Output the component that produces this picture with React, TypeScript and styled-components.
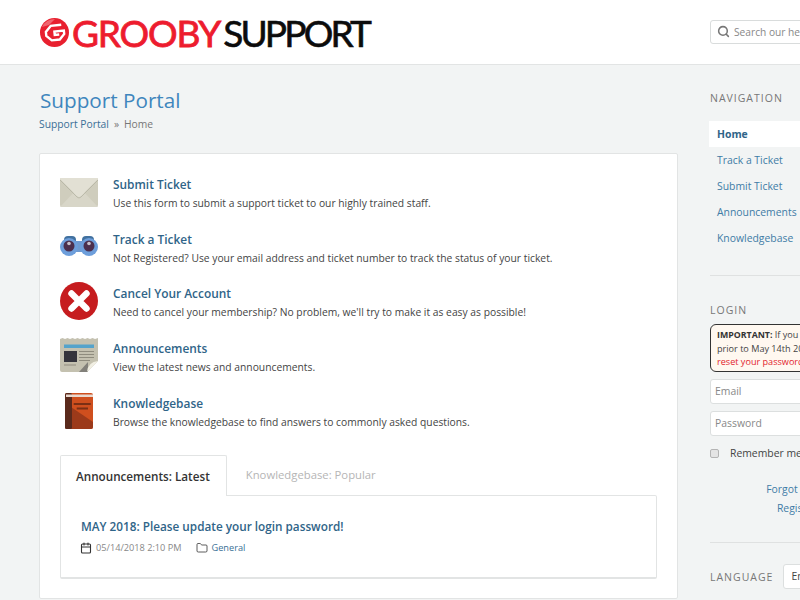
import React from "react";
import styled, { createGlobalStyle } from "styled-components";
import { Search, Calendar, Folder } from "lucide-react";

const Global = createGlobalStyle`
  html, body {
    margin: 0;
    padding: 0;
    overflow: hidden;
    background: #f2f4f4;
  }
  body {
    font-family: "Open Sans", sans-serif;
    font-size: 11px;
    color: #444;
  }
  * { box-sizing: border-box; }
`;

const Page = styled.div`
  width: 952px;
`;

const Header = styled.header`
  height: 65px;
  background: #fff;
  border-bottom: 1px solid #e2e4e4;
  display: flex;
  align-items: center;
  justify-content: space-between;
  padding: 0 40px;
  width: 100vw;
  min-width: 952px;
`;

const Logo = styled.div`
  display: flex;
  align-items: center;
  font-family: Lato, sans-serif;
  font-size: 37px;
  line-height: 1;
  height: 34px;
`;

const LogoRed = styled.span`
  color: #ed1c2e;
  margin-left: 3px;
  letter-spacing: -1.2px;
  -webkit-text-stroke: 0.8px #ed1c2e;
`;

const LogoBlack = styled.span`
  color: #0c0c0c;
  margin-left: 3px;
  letter-spacing: -2.8px;
  -webkit-text-stroke: 0.6px #0c0c0c;
`;

const SearchBox = styled.div`
  width: 202px;
  height: 24px;
  margin-top: -1px;
  background: #fff;
  border: 1px solid #d9dcdc;
  border-radius: 3px;
  display: flex;
  align-items: center;
  gap: 4px;
  padding-left: 6px;
  color: #888;
  font-size: 10.2px;
  white-space: nowrap;
  svg { color: #777; }
`;

const Main = styled.div`
  display: flex;
  gap: 32px;
  padding: 0 40px 0 39px;
`;

const Column = styled.main`
  width: 639px;
  flex: none;
`;

const Title = styled.h1`
  margin: 20px 0 0 1px;
  font-size: 20.7px;
  font-weight: 400;
  line-height: 30px;
  color: #3f86bd;
`;

const Crumbs = styled.div`
  margin-top: 1px;
  line-height: 16px;
  font-size: 10.3px;
  color: #777;
  display: flex;
  gap: 5px;
  a { color: #3a6f96; }
`;

const Card = styled.section`
  margin-top: 21px;
  height: 446px;
  background: #fff;
  border: 1px solid #e2e4e4;
  border-radius: 2px;
  padding: 20px 20px 0;
`;

const Rows = styled.div`
  display: flex;
  flex-direction: column;
  gap: 18.7px;
`;

const Row = styled.div`
  display: flex;
  height: 36px;
`;

const IconBox = styled.div`
  width: 38px;
  height: 36px;
  margin-right: 15px;
  flex: none;
  svg { display: block; }
`;

const RowTitle = styled.a`
  display: block;
  margin-top: 2px;
  font-size: 11.9px;
  font-weight: 600;
  line-height: 17px;
  color: #2f6488;
`;

const RowText = styled.div`
  margin-top: 3px;
  font-size: 10.3px;
  line-height: 15px;
  color: #444;
`;

const Tabs = styled.div`
  display: flex;
  margin-top: 26px;
  height: 41px;
`;

const Tab = styled.div<{ $active?: boolean }>`
  height: 41px;
  padding: ${(p) => (p.$active ? "0 16px 0 15px" : "0 16px 2px 18px")};
  display: flex;
  align-items: center;
  font-size: ${(p) => (p.$active ? 11.7 : 11.3)}px;
  font-weight: ${(p) => (p.$active ? 600 : 400)};
  color: ${(p) => (p.$active ? "#333" : "#b5b5b5")};
  background: ${(p) => (p.$active ? "#fff" : "transparent")};
  border: 1px solid ${(p) => (p.$active ? "#e2e4e4" : "transparent")};
  border-bottom: none;
  border-radius: 2px 2px 0 0;
  position: relative;
  z-index: 1;
`;

const Panel = styled.div`
  height: 84px;
  margin-top: -1px;
  border: 1px solid #e2e4e4;
  border-bottom-width: 2px;
  border-radius: 0 2px 2px 2px;
  padding: 21px 20px 0 19px;
`;

const PanelTitle = styled.a`
  display: block;
  margin-left: 1px;
  font-size: 11.75px;
  font-weight: 600;
  line-height: 18px;
  color: #2f6488;
`;

const Meta = styled.div`
  display: flex;
  align-items: center;
  margin-top: 6px;
  font-size: 9.2px;
  line-height: 14px;
  color: #888;
  svg { color: #333; flex: none; }
`;

const MetaItem = styled.span`
  display: flex;
  align-items: center;
  gap: 4px;
  margin-right: 14px;
  a { color: #3a6f96; }
`;

const Sidebar = styled.aside`
  width: 202px;
  flex: none;
`;

const SideHeading = styled.h3`
  margin: 0;
  font-size: 10.5px;
  font-weight: 400;
  letter-spacing: 1px;
  line-height: 16px;
  color: #777;
  text-transform: uppercase;
`;

const Nav = styled.nav`
  margin: 15px 0 0 -1px;
  display: flex;
  flex-direction: column;
`;

const NavItem = styled.a<{ $active?: boolean }>`
  height: 26.1px;
  padding-left: 8px;
  line-height: 26px;
  font-size: 10.4px;
  font-weight: ${(p) => (p.$active ? 700 : 400)};
  color: ${(p) => (p.$active ? "#2f6488" : "#3f7ca6")};
  background: ${(p) => (p.$active ? "#fff" : "transparent")};
`;

const Rule = styled.hr<{ $top?: number }>`
  border: none;
  border-top: 1px solid #dfe1e1;
  margin: ${(p) => p.$top ?? 0}px 0 0;
`;

const LoginHeading = styled(SideHeading)`
  margin-top: 26px;
`;

const NavHeading = styled(SideHeading)`
  margin-top: 25px;
`;

const Notice = styled.div`
  margin-top: 6px;
  height: 48px;
  padding: 3px 6px;
  background: #fff8f0;
  border: 1px solid #333;
  border-radius: 6px;
  font-size: 9.1px;
  line-height: 13px;
  white-space: nowrap;
  color: #444;
  b { color: #333; font-size: 8.8px; }
  a { color: #e2242c; }
`;

const Field = styled.div`
  height: 25px;
  margin-top: 7px;
  background: #fff;
  border: 1px solid #dcdfdf;
  border-radius: 3px;
  padding-left: 4px;
  line-height: 23px;
  font-size: 10.4px;
  color: #888;
`;

const Remember = styled.label`
  display: flex;
  align-items: center;
  margin-top: 11px;
  height: 12px;
  font-size: 10.4px;
  color: #444;
`;

const Check = styled.span`
  width: 9px;
  height: 9px;
  margin-right: 11px;
  background: #e4e4e4;
  border: 1px solid #b4b4b4;
  border-radius: 2px;
`;

const Links = styled.div`
  display: flex;
  flex-direction: column;
  align-items: center;
  margin: 23px 0 26px;
  padding-right: 4px;
  gap: 4px;
  font-size: 10.4px;
  line-height: 15px;
  white-space: nowrap;
  color: #3f7ca6;
`;

const Lang = styled.div`
  display: flex;
  align-items: center;
  margin-top: 21px;
  gap: 10px;
`;

const Select = styled.div`
  width: 119px;
  height: 25px;
  background: #fff;
  border: 1px solid #dcdfdf;
  border-radius: 3px;
  padding-left: 7px;
  line-height: 23px;
  font-size: 10.4px;
  color: #444;
`;

const EnvelopeIcon = () => (
  <svg width="38" height="29" viewBox="0 0 38 29" style={{ marginTop: 4 }}>
    <rect width="38" height="29" rx="2" fill="#cfcdbd" />
    <path d="M0 29 L15 13 Q19 10 23 13 L38 29Z" fill="#d8d6c8" />
    <path d="M0 1 L17 18 Q19 20 21 18 L38 1 V0 H0Z" fill="#e2e0d4" />
    <path d="M0 2 L17 19 Q19 21 21 19 L38 2" fill="none" stroke="#b4b2a2" strokeWidth="0.8" />
  </svg>
);

const BinocularsIcon = () => (
  <svg width="38" height="20" viewBox="0 0 38 20" style={{ marginTop: 7 }}>
    <rect x="4" y="0" width="12" height="8" rx="4" fill="#41719f" />
    <rect x="22" y="0" width="12" height="8" rx="4" fill="#41719f" />
    <rect x="12" y="5" width="14" height="11" fill="#6f9ad0" />
    <circle cx="9" cy="11" r="9" fill="#6d9edb" />
    <circle cx="29" cy="11" r="9" fill="#6d9edb" />
    <circle cx="9" cy="10" r="5.5" fill="#4c2f4d" />
    <circle cx="29" cy="10" r="5.5" fill="#4c2f4d" />
    <circle cx="9" cy="7.5" r="1.8" fill="#c9c2cc" />
    <circle cx="29" cy="7.5" r="1.8" fill="#c9c2cc" />
  </svg>
);

const CancelIcon = () => (
  <svg width="38" height="38" viewBox="0 0 38 38" style={{ marginTop: -1 }}>
    <circle cx="19" cy="19" r="19" fill="#c61c1f" />
    <path d="M11.5 11.5 L26.5 26.5 M26.5 11.5 L11.5 26.5" stroke="#fff" strokeWidth="6.4" strokeLinecap="round" />
  </svg>
);

const NewsIcon = () => (
  <svg width="38" height="34" viewBox="0 0 38 34">
    <path d="M0 1 L2.5 0 L5 1 L7.5 0 L10 1 L12.5 0 L15 1 L17.5 0 L20 1 L22.5 0 L25 1 L27.5 0 L30 1 L32.5 0 L35 1 L38 0 V23 L27 34 H2 Q0 34 0 32Z" fill="#c4c1b0" />
    <rect x="4" y="6.5" width="30" height="3.5" fill="#55a3cb" />
    <rect x="4" y="13" width="13" height="11" fill="#34343c" />
    <path d="M19 13.5 H34 M19 16.5 H34 M19 19.5 H34 M19 22.5 H30 M4 27 H16" stroke="#8f8c7e" strokeWidth="1.1" />
    <path d="M19 34 L28 24 V34Z" fill="#82807a" />
    <path d="M38 23 L27 34 Q28 24 38 23Z" fill="#f1efe3" />
  </svg>
);

const BookIcon = () => (
  <svg width="38" height="36" viewBox="0 0 38 36">
    <rect x="5" y="0" width="28" height="36" rx="2" fill="#cf4f1e" />
    <path d="M11 14 L33 29 V34 Q33 36 31 36 H11Z" fill="#9c3a1a" />
    <rect x="5" y="0" width="7" height="36" rx="1.5" fill="#5a2a1c" />
    <rect x="6" y="1.5" width="27" height="2.5" fill="#e9d9cf" />
    <rect x="13.7" y="10" width="17" height="2" fill="#7b2f14" />
    <rect x="16.7" y="14.5" width="11.3" height="2" fill="#7b2f14" />
  </svg>
);

const GLogo = () => (
  <svg width="29" height="29" viewBox="0 0 29 29" style={{ flex: "none" }}>
    <circle cx="14.5" cy="14.5" r="14.5" fill="#e8202f" />
    <path d="M2 9 Q6 1 15 1 L9 7Z" fill="#f0656f" />
    <path d="M22 7.5 H11.5 L6 13 V17 L11 22 H19 L24 17 V13.5 H14.5 V17 H19" fill="none" stroke="#fff" strokeWidth="2.4" transform="rotate(-6 14.5 14.5)" />
  </svg>
);

const items = [
  { icon: <EnvelopeIcon />, title: "Submit Ticket", text: "Use this form to submit a support ticket to our highly trained staff." },
  { icon: <BinocularsIcon />, title: "Track a Ticket", text: "Not Registered? Use your email address and ticket number to track the status of your ticket." },
  { icon: <CancelIcon />, title: "Cancel Your Account", text: "Need to cancel your membership? No problem, we'll try to make it as easy as possible!" },
  { icon: <NewsIcon />, title: "Announcements", text: "View the latest news and announcements." },
  { icon: <BookIcon />, title: "Knowledgebase", text: "Browse the knowledgebase to find answers to commonly asked questions." },
];

const App = () => (
  <Page>
    <Global />
    <Header>
      <Logo>
        <GLogo />
        <LogoRed>GROOBY</LogoRed>
        <LogoBlack>SUPPORT</LogoBlack>
      </Logo>
      <SearchBox>
        <Search size={13} strokeWidth={2.8} />
        Search our help center
      </SearchBox>
    </Header>
    <Main>
      <Column>
        <Title>Support Portal</Title>
        <Crumbs>
          <a>Support Portal</a>
          <span>»</span>
          <span>Home</span>
        </Crumbs>
        <Card>
          <Rows>
            {items.map((item) => (
              <Row key={item.title}>
                <IconBox>{item.icon}</IconBox>
                <div>
                  <RowTitle>{item.title}</RowTitle>
                  <RowText>{item.text}</RowText>
                </div>
              </Row>
            ))}
          </Rows>
          <Tabs>
            <Tab $active>Announcements: Latest</Tab>
            <Tab>Knowledgebase: Popular</Tab>
          </Tabs>
          <Panel>
            <PanelTitle>MAY 2018: Please update your login password!</PanelTitle>
            <Meta>
              <MetaItem>
                <Calendar size={12} strokeWidth={2.2} />
                05/14/2018 2:10 PM
              </MetaItem>
              <MetaItem>
                <Folder size={12} strokeWidth={1.6} />
                <a>General</a>
              </MetaItem>
            </Meta>
          </Panel>
        </Card>
      </Column>
      <Sidebar>
        <NavHeading>Navigation</NavHeading>
        <Nav>
          <NavItem $active>Home</NavItem>
          <NavItem>Track a Ticket</NavItem>
          <NavItem>Submit Ticket</NavItem>
          <NavItem>Announcements</NavItem>
          <NavItem>Knowledgebase</NavItem>
        </Nav>
        <Rule $top={24} />
        <LoginHeading>Login</LoginHeading>
        <Notice>
          <b>IMPORTANT:</b> If you registered
          <br />
          prior to May 14th 2018, please
          <br />
          <a>reset your password</a>
        </Notice>
        <Field>Email</Field>
        <Field>Password</Field>
        <Remember>
          <Check />
          Remember me
        </Remember>
        <Links>
          <a>Forgot Password?</a>
          <a>Register Now</a>
        </Links>
        <Rule />
        <Lang>
          <SideHeading>Language</SideHeading>
          <Select>English</Select>
        </Lang>
      </Sidebar>
    </Main>
  </Page>
);

export default App;
